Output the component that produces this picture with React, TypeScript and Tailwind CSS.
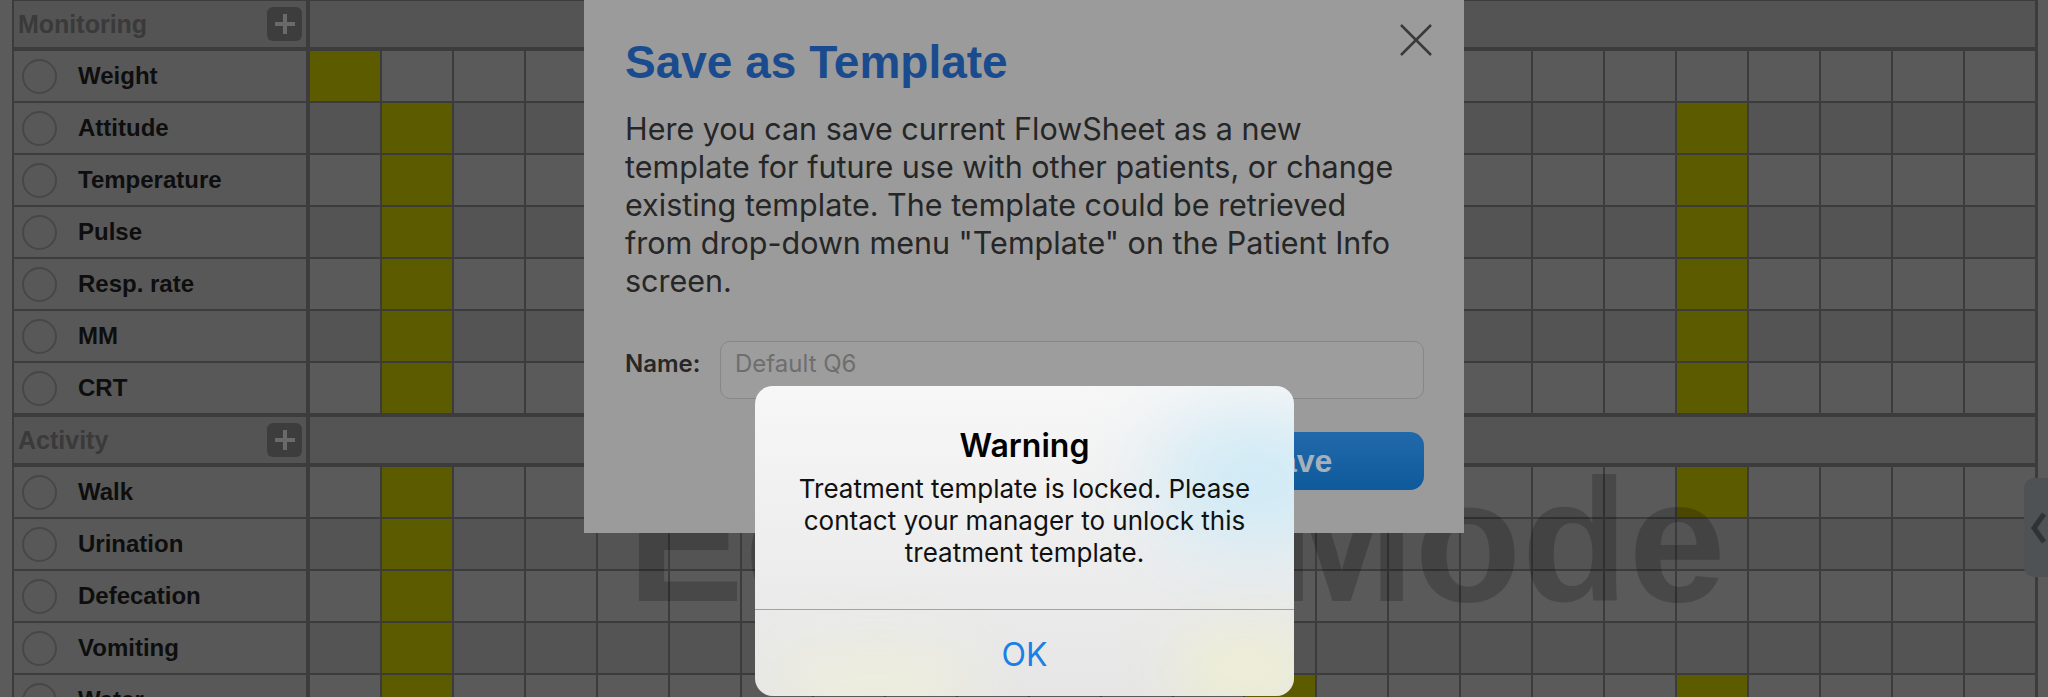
type Item = { name: string; on: number[] };

const MONITORING: Item[] = [
  { name: "Weight", on: [0] },
  { name: "Attitude", on: [1, 19] },
  { name: "Temperature", on: [1, 19] },
  { name: "Pulse", on: [1, 19] },
  { name: "Resp. rate", on: [1, 19] },
  { name: "MM", on: [1, 19] },
  { name: "CRT", on: [1, 19] },
];

const ACTIVITY: Item[] = [
  { name: "Walk", on: [1, 19] },
  { name: "Urination", on: [1] },
  { name: "Defecation", on: [1] },
  { name: "Vomiting", on: [1] },
  { name: "Water", on: [1, 13, 19] },
];

const COLS = Array.from({ length: 24 }, (_, i) => i);

function SectionHeader({ title, className }: { title: string; className?: string }) {
  return (
    <div className={"flex h-[46px] shrink-0 gap-[4px] " + (className ?? "")}>
      <div className="flex w-[292px] items-center justify-between bg-[#545454] pl-[4px] pr-[4px]">
        <span className="text-[25px] font-bold leading-none text-[#3a3a3a]">{title}</span>
        <span className="flex h-[34px] w-[35px] items-center justify-center rounded-[6px] bg-[#3d3d3d]">
          <svg width="22" height="22" viewBox="0 0 22 22">
            <path d="M11 1v20M1 11h20" stroke="#6a6a6a" strokeWidth="4" />
          </svg>
        </span>
      </div>
      <div className="flex-1 bg-[#545454]" />
    </div>
  );
}

function Row({ item, idx }: { item: Item; idx: number }) {
  const light = idx % 2 === 0;
  return (
    <div className="flex h-[50px] shrink-0 gap-[4px]">
      <div className="flex w-[292px] items-center bg-[#585858]">
        <span className="ml-[8px] h-[35px] w-[35px] rounded-full border-2 border-[#474747]" />
        <span className="ml-[21px] text-[24px] font-bold leading-none text-[#0e0e0e]">
          {item.name}
        </span>
      </div>
      <div className="grid flex-1 grid-cols-[repeat(24,minmax(0,1fr))] gap-x-[2px]">
        {COLS.map((c) => (
          <div
            key={c}
            className={
              item.on.includes(c)
                ? "bg-[#5d5b00]"
                : light
                  ? "bg-[#5a5a5a]"
                  : "bg-[#545454]"
            }
          />
        ))}
      </div>
    </div>
  );
}

export default function App() {
  return (
    <div className="relative flex h-[697px] w-[2048px] overflow-hidden bg-[#5b5b5b] font-['Liberation_Sans',Arial,sans-serif]">
      {/* Flow sheet (dimmed) */}
      <div className="ml-[12px] flex w-[2026px] flex-col gap-[2px] bg-[#3c3c3c] pl-[2px] pr-[3px] pt-[1px]">
        <SectionHeader title="Monitoring" className="mb-[2px]" />
        {MONITORING.map((it, i) => (
          <Row key={it.name} item={it} idx={i} />
        ))}
        <SectionHeader title="Activity" className="mb-[2px] mt-[2px]" />
        {ACTIVITY.map((it, i) => (
          <Row key={it.name} item={it} idx={i} />
        ))}
      </div>

      {/* Watermark */}
      <div className="pointer-events-none absolute left-[314px] top-[453px] w-[1725px] whitespace-nowrap text-center text-[175px] font-bold leading-none text-black/20">
        Editing Mode
      </div>

      {/* Side tab */}
      <div className="absolute right-0 top-[478px] flex h-[99px] w-[24px] items-center justify-end rounded-l-[10px] bg-[#4e5255]">
        <svg width="20" height="34" viewBox="0 0 20 34">
          <path d="M16 3 6 17l10 14" fill="none" stroke="#2f3336" strokeWidth="5" />
        </svg>
      </div>

      {/* Save as Template modal (dimmed) */}
      <div className="absolute left-[584px] top-0 flex h-[533px] w-[880px] flex-col bg-[#9b9b9b] pl-[41px] pr-[40px] pt-[39px]">
        <h1 className="text-[46px] font-bold leading-none text-[#1a4b8e]">Save as Template</h1>
        <p className="mt-[25px] whitespace-nowrap font-['Inter',sans-serif] text-[30.5px] leading-[38px] text-[#262626]">
          <span className="block">Here you can save current FlowSheet as a new</span>
          <span className="block">template for future use with other patients, or change</span>
          <span className="block">existing template. The template could be retrieved</span>
          <span className="block">from drop-down menu "Template" on the Patient Info</span>
          <span className="block">screen.</span>
        </p>
        <div className="mt-[41px] flex items-start">
          <span className="mt-[11px] w-[95px] font-['Inter',sans-serif] text-[24px] font-semibold leading-none text-[#272727]">
            Name:
          </span>
          <div className="h-[58px] flex-1 rounded-[10px] border border-[#878787] bg-[#9d9d9d] pl-[14px] pt-[10px] font-['Inter',sans-serif] text-[24px] leading-none text-[#6e6e6e]">
            Default Q6
          </div>
        </div>
        <div className="mt-[33px] flex justify-end">
          <button className="flex h-[58px] w-[258px] items-center justify-center rounded-[14px] bg-[linear-gradient(180deg,#2169ab_0%,#0f5a9b_100%)] text-[32px] font-bold leading-none text-[#a6b0ba]">
            Save
          </button>
        </div>
        <svg
          className="absolute right-[31px] top-[23px]"
          width="34"
          height="34"
          viewBox="0 0 34 34"
        >
          <path d="M2 2l30 30M32 2 2 32" stroke="#393939" strokeWidth="2.5" />
        </svg>
      </div>

      {/* iOS alert */}
      <div className="absolute left-[755px] top-[386px] flex h-[310px] w-[539px] flex-col overflow-hidden rounded-[18px] bg-[linear-gradient(180deg,#f7f7f7_0%,#eeeeee_50%,#e6e6e6_100%)] font-['Inter',sans-serif]">
        <div className="absolute left-[400px] top-[30px] h-[130px] w-[200px] rounded-full bg-[#cfeaf6] blur-[40px]" />
        <div className="absolute left-[420px] top-[250px] h-[70px] w-[140px] rounded-full bg-[#eeeed2] blur-[30px]" />
        <div className="absolute left-[20px] top-[265px] h-[60px] w-[200px] rounded-full bg-[#eeeedc] blur-[30px]" />
        <div className="relative flex h-[223px] flex-col items-center pt-[40px] text-center">
          <div className="text-[32px] font-semibold leading-[40px] text-black">Warning</div>
          <div className="mt-[7px] whitespace-nowrap text-[26px] leading-[32px] text-[#111111]">
            <span className="block">Treatment template is locked. Please</span>
            <span className="block">contact your manager to unlock this</span>
            <span className="block">treatment template.</span>
          </div>
        </div>
        <div className="relative h-[1px] bg-[#a3a3a3]" />
        <div className="relative flex flex-1 justify-center pt-[29px]">
          <span className="text-[32px] leading-none text-[#1a80e6]">OK</span>
        </div>
      </div>
    </div>
  );
}
